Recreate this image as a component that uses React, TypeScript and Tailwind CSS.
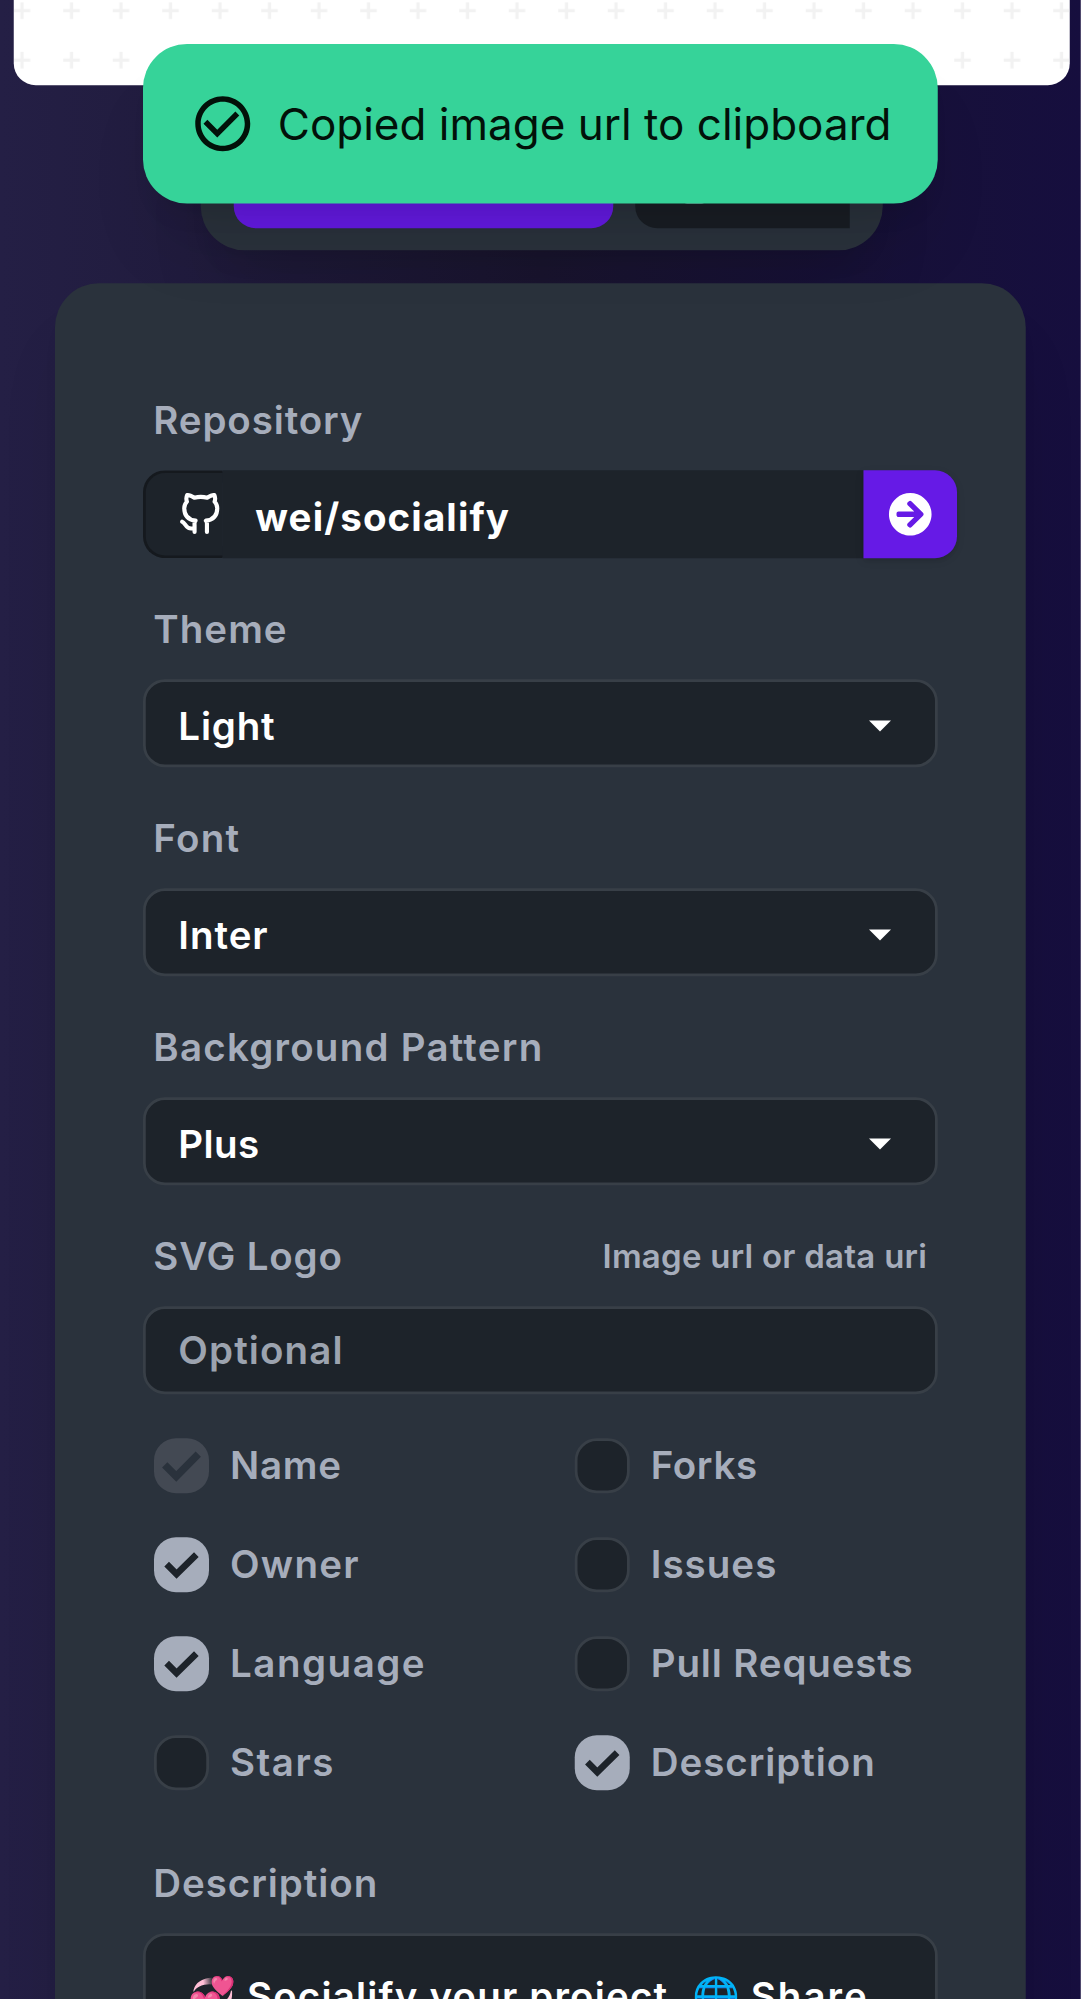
import { MdCheckCircleOutline } from 'react-icons/md'
import { TbBrandGithub } from 'react-icons/tb'
import { FaArrowCircleRight } from 'react-icons/fa'

function Label({ text, tracking, hint }: { text: string; tracking: string; hint?: string }) {
  return (
    <div className="flex h-9 items-center justify-between pr-1 pl-[3.7px] text-sm font-semibold text-[#a6adbb]">
      <span className={`-translate-y-[0.15px] ${tracking}`}>{text}</span>
      {hint && <span className="-mr-[0.1px] text-xs tracking-[0.09px]">{hint}</span>}
    </div>
  )
}

type SelectProps = { label: string; labelTracking: string; value: string; tracking: string }

function SelectField({ label, labelTracking, value, tracking }: SelectProps) {
  return (
    <div>
      <Label text={label} tracking={labelTracking} />
      <div className="flex h-8 items-center justify-between rounded-lg border border-[#383f47] bg-[#1d232a] pr-4 pl-[11.8px] text-sm font-semibold text-white">
        <span className={`pt-0.5 ${tracking}`}>{value}</span>
        <span className="mt-[1.5px] size-0 border-x-4 border-t-4 border-x-transparent border-t-white" />
      </div>
    </div>
  )
}

type Option = { name: string; tracking: string; checked?: boolean; disabled?: boolean }

function Check({ name, tracking, checked, disabled }: Option) {
  return (
    <div className="flex h-9 items-center gap-[7.6px] px-1 text-sm font-semibold text-[#a6adbb]">
      {checked ? (
        <span
          className={
            disabled
              ? 'flex size-5 items-center justify-center rounded-lg bg-[#434953]'
              : 'flex size-5 items-center justify-center rounded-lg bg-[#a6adbb]'
          }
        >
          <svg viewBox="0 0 20 20" className="size-5" fill="none">
            <path
              d={disabled ? 'M3.9 9.7 8.1 13.9 16.1 5.8' : 'M4.6 9.8 8.2 13.4 15.4 6.3'}
              stroke={disabled ? '#2a323c' : '#1d232a'}
              strokeWidth={disabled ? 2.7 : 2.4}
            />
          </svg>
        </span>
      ) : (
        <span className="size-5 rounded-lg border border-[#383f47] bg-[#1d232a]" />
      )}
      <span className={`-translate-y-[0.15px] ${tracking}`}>{name}</span>
    </div>
  )
}

const LEFT: Option[] = [
  { name: 'Name', tracking: 'tracking-[0.27px]', checked: true, disabled: true },
  { name: 'Owner', tracking: 'tracking-[0.46px]', checked: true },
  { name: 'Language', tracking: 'tracking-[0.55px]', checked: true },
  { name: 'Stars', tracking: 'tracking-[0.54px]' },
]
const RIGHT: Option[] = [
  { name: 'Forks', tracking: 'tracking-[0.23px]' },
  { name: 'Issues', tracking: 'tracking-[0.37px]' },
  { name: 'Pull Requests', tracking: 'tracking-[0.31px]' },
  { name: 'Description', tracking: 'tracking-[0.34px]', checked: true },
]

function Preview() {
  return (
    <div className="ml-[5.1px] h-[30.86px] w-[383.8px] overflow-hidden rounded-b-lg bg-white">
      <svg className="block h-full w-full">
        <defs>
          <pattern id="plus" y="0.86" width="18" height="18" patternUnits="userSpaceOnUse">
            <path d="M2.4 0h1.2v2.4H6v1.2H3.6V6H2.4V3.6H0V2.4h2.4z" fill="#f2f2f2" />
          </pattern>
        </defs>
        <rect width="100%" height="100%" fill="url(#plus)" />
      </svg>
    </div>
  )
}

export default function App() {
  return (
    <div className="h-[1999px] w-[1081px] overflow-hidden">
      <div className="relative h-[727px] w-[393.1px] origin-top-left scale-[2.75] overflow-hidden bg-linear-to-r from-[#241f45] via-[#1b1631] to-[#160e3e] font-['Inter',sans-serif]">
        <Preview />

        <div className="mx-auto flex h-[60px] w-[248px] items-end justify-center gap-2 rounded-2xl bg-[#2a323c] px-3 pb-2 shadow-xl">
          <div className="h-12 w-[138px] rounded-lg bg-[#661ae6]" />
          <div className="flex h-12 flex-1 items-end rounded-l-lg bg-[#191e24] pb-[8.6px] pl-[17px]">
            <div className="h-3 w-[9px] rounded-[2px] border border-[#a6adbb]" />
          </div>
        </div>

        <div className="mx-auto mt-3 w-[353px] rounded-2xl bg-[#2a323c] p-8 shadow-xl">
          <div className="flex flex-col gap-2">
            <div>
              <Label text="Repository" tracking="tracking-[0.32px]" />
              <div className="flex h-8 w-[296px]">
                <div className="flex w-[29px] items-center rounded-l-lg border border-r-0 border-[#15191e] bg-[#1d232a] pl-[11px] text-white">
                  <TbBrandGithub className="size-[18px] shrink-0 -translate-y-[0.3px]" />
                </div>
                <div className="flex flex-1 items-center bg-[#1d232a] pt-0.5 pl-[11.8px] text-sm font-bold tracking-[0.4px] text-white">
                  wei/socialify
                </div>
                <div className="flex w-[34px] items-center justify-center rounded-r-lg bg-[#661ae6] text-white shadow-sm">
                  <FaArrowCircleRight className="size-4" />
                </div>
              </div>
            </div>
            <SelectField
              label="Theme"
              labelTracking="tracking-[0.38px]"
              value="Light"
              tracking="tracking-[0.29px]"
            />
            <SelectField
              label="Font"
              labelTracking="tracking-[0.46px]"
              value="Inter"
              tracking="tracking-[0.35px]"
            />
            <SelectField
              label="Background Pattern"
              labelTracking="tracking-[0.45px]"
              value="Plus"
              tracking="tracking-[0.15px]"
            />
            <div>
              <Label text="SVG Logo" tracking="tracking-[0.3px]" hint="Image url or data uri" />
              <div className="flex h-8 items-center rounded-lg border border-[#383f47] bg-[#1d232a] pr-3 pl-[11.8px] text-sm font-semibold tracking-[0.4px] text-[#9ca3af]">
                Optional
              </div>
            </div>
            <div className="flex">
              <div className="w-[153px]">
                {LEFT.map((o) => (
                  <Check key={o.name} {...o} />
                ))}
              </div>
              <div className="flex-1">
                {RIGHT.map((o) => (
                  <Check key={o.name} {...o} />
                ))}
              </div>
            </div>
            <div>
              <Label text="Description" tracking="tracking-[0.34px]" />
              <div className="h-24 rounded-lg border border-[#383f47] bg-[#1d232a] py-2 pr-4 pl-[15.4px] text-sm leading-7 font-semibold tracking-[0.43px] text-white">
                💞 Socialify your project. 🌐 <span className="tracking-[0.75px]">Share</span> your
                project with the world!
              </div>
            </div>
          </div>
        </div>

        <div className="absolute top-4 left-[52px] flex h-[58px] w-[289px] items-center gap-2 rounded-2xl bg-[#36d399] px-[17px] text-base whitespace-nowrap text-[#021109] shadow-xl">
          <MdCheckCircleOutline className="size-6 shrink-0" />
          <span>Copied image url to clipboard</span>
        </div>
      </div>
    </div>
  )
}
